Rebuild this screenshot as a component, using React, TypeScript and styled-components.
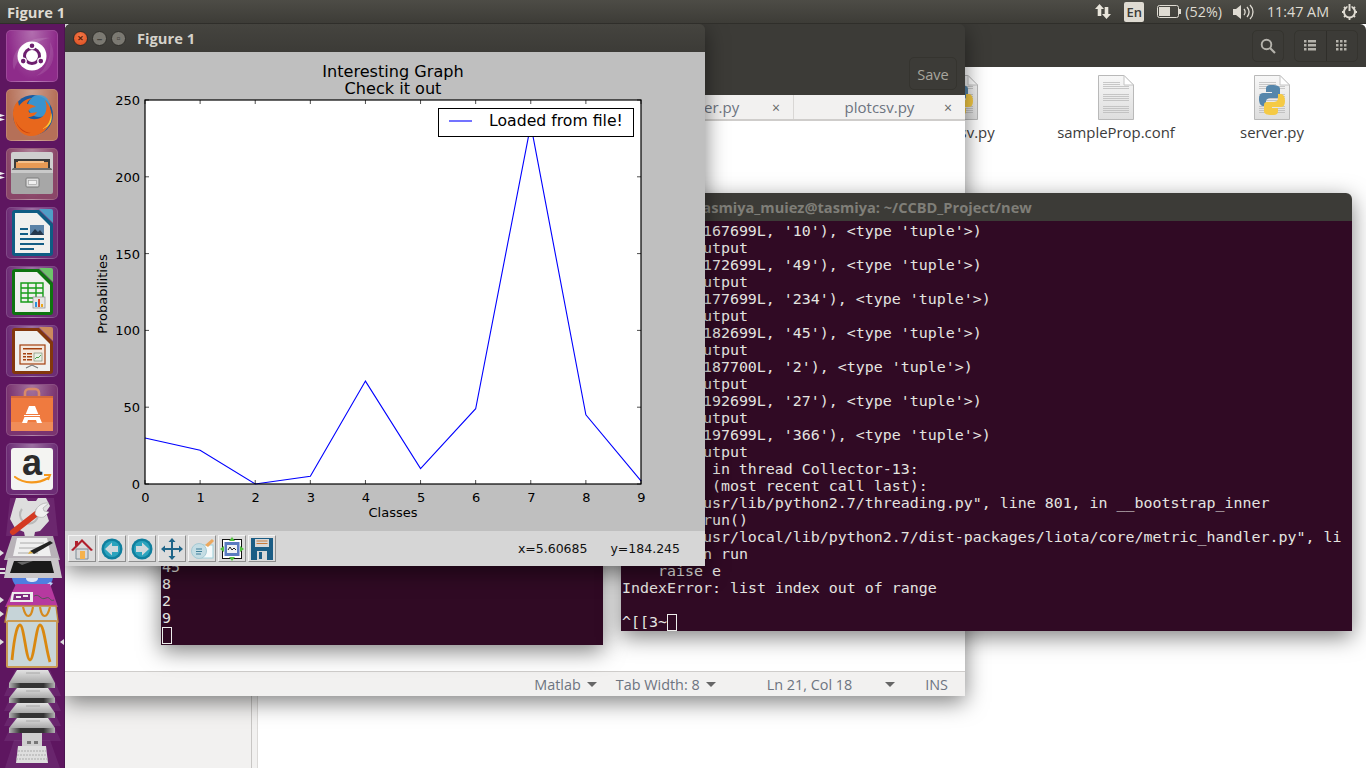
import React from "react";
import styled, { createGlobalStyle } from "styled-components";

/* ── Global ─────────────────────────────────────── */
const Global = createGlobalStyle`
  html, body { margin: 0; padding: 0; width: 1366px; height: 768px; overflow: hidden; background: #fff; }
  * { box-sizing: border-box; }
`;

const uiFont = `"Open Sans", "Noto Sans", sans-serif`;
const plotFont = `"DejaVu Sans", sans-serif`;
const termFont = `"DejaVu Sans Mono", monospace`;

const Screen = styled.div`
  width: 1366px;
  height: 768px;
  display: flex;
  flex-direction: column;
  font-family: ${uiFont};
  overflow: hidden;
`;

/* ── Top panel ──────────────────────────────────── */
const TopPanel = styled.header`
  height: 24px;
  flex-shrink: 0;
  display: flex;
  align-items: center;
  padding: 0 8px 0 7px;
  background: linear-gradient(#4d4c46, #3d3c37);
  border-bottom: 1px solid #2f2e2a;
  color: #dfdbd2;
  position: relative;
  z-index: 20;
`;

const PanelTitle = styled.span`
  font-size: 14.7px;
  font-weight: 700;
  flex: 1;
`;

const PanelItem = styled.span<{ $left: number }>`
  margin-left: ${({ $left }) => $left}px;
  font-size: 14.3px;
  display: flex;
  align-items: center;
  white-space: nowrap;
`;

const LangBadge = styled.span`
  width: 20px;
  height: 20px;
  border-radius: 2px;
  background: #dfdbd2;
  color: #3c3b37;
  font-size: 13px;
  font-weight: 600;
  display: flex;
  align-items: center;
  justify-content: center;
`;

/* ── Desktop ────────────────────────────────────── */
const Body = styled.div`
  flex: 1;
  display: flex;
  min-height: 0;
`;

const Launcher = styled.nav`
  width: 65px;
  flex-shrink: 0;
  padding: 6px 0 0 6px;
  display: flex;
  flex-direction: column;
  gap: 7px;
  background: #5e1660;
  border-right: 1px solid #4c1450;
  position: relative;
  z-index: 10;
`;

const Tile = styled.div<{ $tint: string }>`
  width: 52px;
  height: 52px;
  flex-shrink: 0;
  border-radius: 5px;
  border: 1px solid rgba(255, 255, 255, 0.14);
  background: radial-gradient(ellipse at 50% 0%, rgba(255, 255, 255, 0.32), rgba(255, 255, 255, 0) 70%),
    ${({ $tint }) => $tint};
  position: relative;

  svg {
    display: block;
    position: absolute;
    left: -1px;
    top: -1px;
  }
`;

const Pip = styled.i<{ $top: number }>`
  position: absolute;
  left: -7px;
  top: ${({ $top }) => $top}px;
  width: 5px;
  height: 3px;
  background: #eee;
  clip-path: polygon(0 0, 100% 50%, 0 100%);
`;

const LauncherStack = styled.svg`
  display: block;
  margin: -4px 0 0 -6px;
  flex-shrink: 0;
`;

const Desktop = styled.main`
  flex: 1;
  position: relative;
  min-width: 0;
`;

/* Windows are free items on the desktop, so they are placed by coordinates */
const Win = styled.section<{ $x: number; $y: number; $w: number; $h: number; $z: number }>`
  position: absolute;
  left: ${({ $x }) => $x - 65}px;
  top: ${({ $y }) => $y - 24}px;
  width: ${({ $w }) => $w}px;
  height: ${({ $h }) => $h}px;
  z-index: ${({ $z }) => $z};
  display: flex;
  flex-direction: column;
  border-radius: 6px 6px 0 0;
  overflow: hidden;
`;

const ShadowWin = styled(Win)`
  overflow: visible;
  box-shadow: 0 6px 22px rgba(0, 0, 0, 0.5);
`;

/* ── File manager ───────────────────────────────── */
const FilesHeader = styled.div`
  height: 43px;
  flex-shrink: 0;
  display: flex;
  justify-content: flex-end;
  align-items: center;
  gap: 10px;
  padding-right: 8px;
  background: #3c3b37;
`;

const HeadBtn = styled.div<{ $w: number }>`
  width: ${({ $w }) => $w}px;
  height: 32px;
  display: flex;
  border: 1px solid #35342f;
  border-radius: 5px;
  align-items: center;
  justify-content: center;
`;

const Segment = styled.div<{ $line?: boolean }>`
  flex: 1;
  height: 100%;
  display: flex;
  align-items: center;
  justify-content: center;
  border-left: ${({ $line }) => ($line ? "1px solid #2f2e2a" : "none")};
`;

const FilesMain = styled.div`
  flex: 1;
  display: flex;
  min-height: 0;
`;

const Sidebar = styled.aside`
  width: 187px;
  background: #f2f1f0;
  border-right: 1px solid #c8c6c4;
`;

const SideGap = styled.div`
  width: 6px;
  background: #f2f1f0;
  border-right: 1px solid #dcdad8;
`;

const FileGrid = styled.div`
  flex: 1;
  display: flex;
  justify-content: flex-end;
  align-items: flex-start;
  padding: 8px 16px 0 0;
  background: #fff;
`;

const FileItem = styled.figure`
  width: 156px;
  margin: 0;
  display: flex;
  flex-direction: column;
  align-items: center;
  gap: 2px;
`;

const FileName = styled.figcaption`
  font-size: 14.9px;
  line-height: 20px;
  color: #3c3c3c;
`;

/* ── Editor ─────────────────────────────────────── */
const EditorHeader = styled.div`
  height: 71px;
  flex-shrink: 0;
  display: flex;
  align-items: flex-end;
  justify-content: flex-end;
  padding: 0 8px 5px 0;
  background: #3c3b37;
  border-radius: 6px 6px 0 0;
`;

const SaveBtn = styled.div`
  width: 48px;
  height: 33px;
  display: flex;
  align-items: center;
  justify-content: center;
  border: 1px solid #35342f;
  border-radius: 5px;
  color: #a8a69e;
  font-size: 14.6px;
`;

const TabBar = styled.div`
  height: 26px;
  flex-shrink: 0;
  display: flex;
  justify-content: flex-end;
  background: #f2f1f0;
  border-bottom: 2px solid #cfcdcb;
`;

const Tab = styled.div<{ $line?: boolean }>`
  width: 172px;
  position: relative;
  display: flex;
  align-items: center;
  justify-content: center;
  color: #6d7480;
  font-size: 15px;
  border-left: ${({ $line }) => ($line ? "1px solid #d9d7d5" : "none")};
`;

const TabClose = styled.span`
  position: absolute;
  right: 13px;
  top: 3px;
  font-size: 14px;
  color: #666;
`;

const EditorText = styled.div`
  flex: 1;
  background: #fff;
`;

const StatusBar = styled.footer`
  height: 25px;
  flex-shrink: 0;
  display: flex;
  justify-content: flex-end;
  align-items: center;
  padding-right: 17px;
  background: #f2f1f0;
  border-top: 1px solid #cfcdcb;
  color: #6d7480;
  font-size: 14.4px;
`;

const StatusItem = styled.span<{ $left: number }>`
  margin-left: ${({ $left }) => $left}px;
  display: flex;
  align-items: center;
  gap: 6px;
`;

const Caret = styled.i`
  width: 0;
  height: 0;
  border-left: 5px solid transparent;
  border-right: 5px solid transparent;
  border-top: 5px solid #666;
`;

/* ── Terminals ──────────────────────────────────── */
const TermTitle = styled.div`
  height: 28px;
  flex-shrink: 0;
  display: flex;
  align-items: center;
  padding-left: 75px;
  background: #3c3b37;
  border-radius: 6px 6px 0 0;
  color: #7f7e78;
  font-size: 14.6px;
  font-weight: 700;
`;

const TermBody = styled.pre<{ $end?: boolean }>`
  flex: 1;
  margin: 0;
  padding: ${({ $end }) => ($end ? "0 0 1px 1px" : "2px 0 0 1px")};
  display: flex;
  flex-direction: column;
  justify-content: ${({ $end }) => ($end ? "flex-end" : "flex-start")};
  background: #300a24;
  color: #e4e4e0;
  font-family: ${termFont};
  font-size: 14.95px;
  line-height: 17px;
  overflow: hidden;
`;

const TermLine = styled.div<{ $indent?: number }>`
  min-height: 17px;
  height: 17px;
  white-space: pre;
  margin-left: ${({ $indent }) => ($indent ?? 0) * 8.99}px;
`;

const TermCursor = styled.span`
  display: inline-block;
  width: 10px;
  height: 17px;
  border: 1px solid #eeeeec;
  vertical-align: top;
`;

/* ── Figure window ──────────────────────────────── */
const FigTitleBar = styled.div`
  height: 28px;
  flex-shrink: 0;
  display: flex;
  align-items: center;
  gap: 4px;
  padding-left: 8px;
  background: linear-gradient(#45443f, #3c3b37);
  border-radius: 6px 6px 0 0;
`;

const WinDot = styled.span<{ $close?: boolean }>`
  width: 15px;
  height: 15px;
  border-radius: 50%;
  background: ${({ $close }) => ($close ? "radial-gradient(circle at 50% 35%, #f47a4a, #d9491c)" : "#7b7972")};
  color: ${({ $close }) => ($close ? "#5c1d08" : "#44433e")};
  border: 1px solid #2e2d29;
  font-size: 11px;
  line-height: 12px;
  text-align: center;
  font-weight: 700;
`;

const FigTitle = styled.span`
  margin-left: 7px;
  color: #d5d2ca;
  font-size: 14.7px;
  font-weight: 700;
`;

const Canvas = styled.svg`
  display: block;
  flex-shrink: 0;
  background: #bfbfbf;
`;

const PlotText = styled.text<{ $size?: number; $anchor?: string }>`
  font-family: ${plotFont};
  font-size: ${({ $size }) => $size ?? 13}px;
  text-anchor: ${({ $anchor }) => $anchor ?? "middle"};
  fill: #000;
`;

const FigToolbar = styled.div`
  flex: 1;
  display: flex;
  align-items: center;
  gap: 2px;
  padding: 0 25px 0 3px;
  background: #d6d6d6;
`;

const ToolBtn = styled.div`
  width: 28px;
  height: 27px;
  display: flex;
  align-items: center;
  justify-content: center;
  background: #dcdcdc;
  border: 1px solid;
  border-color: #f4f4f4 #8f8f8f #8f8f8f #f4f4f4;
`;

const Coords = styled.span<{ $left?: boolean }>`
  font-family: ${plotFont};
  font-size: 12.5px;
  color: #111;
  margin-left: ${({ $left }) => ($left ? "auto" : "21px")};
  white-space: nowrap;
`;

/* ── Chart data ─────────────────────────────────── */
const values = [30, 22, 0, 5, 67, 10, 49, 234, 45, 2];
const plot = { x: 80, y: 48, w: 496, h: 384 };
const px = (i: number) => plot.x + (i * plot.w) / 9;
const py = (v: number) => plot.y + plot.h - (v / 250) * plot.h;

const Chart = () => (
  <Canvas width={640} height={479} viewBox="0 0 640 479">
    <PlotText x={328} y={25} $size={16.1}>Interesting Graph</PlotText>
    <PlotText x={328} y={42} $size={16.1}>Check it out</PlotText>
    <rect x={plot.x} y={plot.y} width={plot.w} height={plot.h} fill="#fff" stroke="none" />
    <polyline
      points={values.map((v, i) => `${px(i)},${py(v)}`).join(" ")}
      fill="none"
      stroke="#0000ff"
      strokeWidth={1.1}
    />
    {values.map((_, i) => (
      <g key={i}>
        <path d={`M${px(i)} ${plot.y}v4M${px(i)} ${plot.y + plot.h}v-4`} stroke="#000" strokeWidth={0.7} />
        <PlotText x={px(i) + 0.5} y={plot.y + plot.h + 18}>{i}</PlotText>
      </g>
    ))}
    {[0, 50, 100, 150, 200, 250].map((v) => (
      <g key={v}>
        <path d={`M${plot.x} ${py(v)}h4M${plot.x + plot.w} ${py(v)}h-4`} stroke="#000" strokeWidth={0.7} />
        <PlotText x={plot.x - 5} y={py(v) + 5} $anchor="end">{v}</PlotText>
      </g>
    ))}
    <rect x={plot.x} y={plot.y} width={plot.w} height={plot.h} fill="none" stroke="#000" strokeWidth={1.2} />
    <PlotText x={328} y={465} $size={13}>Classes</PlotText>
    <PlotText transform="translate(42 242) rotate(-90)" $size={13}>Probabilities</PlotText>
    <rect x={373.5} y={56.5} width={195} height={28} fill="#fff" stroke="#000" strokeWidth={1} />
    <path d="M384 69h23" stroke="#0000ff" strokeWidth={1.1} />
    <PlotText x={424} y={74} $size={15.7} $anchor="start">Loaded from file!</PlotText>
  </Canvas>
);

/* ── Launcher icons ─────────────────────────────── */
const DashIcon = () => (
  <svg width={52} height={52} viewBox="0 0 52 52">
    <path d="M8 40C2 22 20 6 44 8c-14 2-30 14-36 32z" fill="#fff" opacity={0.12} />
    <path d="M44 12c8 14 2 30-14 34 10-6 16-20 14-34z" fill="#fff" opacity={0.1} />
    <circle cx={26} cy={26} r={14.5} fill="#fff" />
    <circle cx={26} cy={26} r={7.5} fill="none" stroke="#6d1f6e" strokeWidth={3} />
    <circle cx={26} cy={15.8} r={3} fill="#6d1f6e" stroke="#fff" strokeWidth={1.4} />
    <circle cx={17.2} cy={31.1} r={3} fill="#6d1f6e" stroke="#fff" strokeWidth={1.4} />
    <circle cx={34.8} cy={31.1} r={3} fill="#6d1f6e" stroke="#fff" strokeWidth={1.4} />
  </svg>
);

const FirefoxIcon = () => (
  <svg width={52} height={52} viewBox="0 0 52 52">
    <circle cx={27} cy={26} r={20} fill="#1d5a9e" />
    <circle cx={33} cy={17} r={11} fill="#3f9ed6" opacity={0.85} />
    <path
      d="M7 25c0-6 2-10 5-13l1 5c2-3 6-7 13-8-3 2-5 4-5 6 3 0 7 1 9 3-3 0-6 1-7 3-1 1 0 3 2 3 3 0 5-1 6-1-1 3-5 5-9 5 3 3 9 3 14 0 4-3 6-9 3-17 4 4 8 12 6 20-2 9-10 16-20 16C15 47 7 37 7 25z"
      fill="#e8671c"
    />
    <path d="M36 40c6-3 9-9 9-16 1 2 1 6 0 9-2 4-5 6-9 7z" fill="#f8c93a" />
    <path d="M9 30c2 7 8 13 16 14-6 1-13-3-16-14z" fill="#c9410f" />
  </svg>
);

const FilesIcon = () => (
  <svg width={52} height={52} viewBox="0 0 52 52">
    <path d="M5 6a2 2 0 0 1 2-2h38a2 2 0 0 1 2 2v20H5z" fill="#cfcfcf" />
    <rect x={8} y={11} width={36} height={18} fill="#3b3b3b" />
    <rect x={10} y={14} width={32} height={12} fill="#e89a55" />
    <rect x={12} y={13} width={26} height={2} fill="#f4c08c" />
    <path d="M7 20h38l2 3H5z" fill="#6d6d6d" />
    <rect x={5} y={22} width={42} height={24} rx={2} fill="#a7a7a7" />
    <rect x={5} y={22} width={42} height={3} fill="#c9c9c9" />
    <rect x={20} y={30} width={13} height={9} rx={1} fill="#dcdcdc" stroke="#7b7b7b" />
    <rect x={22.5} y={32.5} width={8} height={4} fill="#f1f1f1" stroke="#9a9a9a" strokeWidth={0.6} />
  </svg>
);

const OfficePage = ({ edge, light, children }: { edge: string; light: string; children: React.ReactNode }) => (
  <svg width={52} height={52} viewBox="0 0 52 52">
    <path d="M33 2h12a2 2 0 0 1 2 2v12z" fill={light} />
    <path d="M6 6a3 3 0 0 1 3-3h24l14 14v29a3 3 0 0 1-3 3H9a3 3 0 0 1-3-3z" fill={edge} />
    <path d="M9 6h22l13 13v27H9z" fill="#f0f0ee" />
    {children}
  </svg>
);

const WriterIcon = () => (
  <OfficePage edge="#0f5c83" light="#4f9ec6">
    <path d="M14 21h8v2h-8zM14 26h8v2h-8zM14 31h24v2H14zM14 36h24v2H14zM14 41h14v2H14z" fill="#135d85" />
    <rect x={24} y={18} width={14} height={10} fill="#5a83a8" />
    <path d="M24 28l5-6 3 3 2-2 4 5z" fill="#26384d" />
  </OfficePage>
);

const CalcIcon = () => (
  <OfficePage edge="#0e7410" light="#6dc46a">
    <path
      d="M15 17h22v19H15zM15 22h22M15 27h22M15 32h22M22 17v19M30 17v19"
      fill="none"
      stroke="#169c19"
      strokeWidth={1.4}
    />
    <rect x={27} y={31} width={12} height={11} fill="#e4e4e4" stroke="#8a8a8a" strokeWidth={0.7} />
    <path d="M29 36h2v5h-2z" fill="#2b8fdc" />
    <path d="M32 33h2v8h-2z" fill="#d8462c" />
    <path d="M35 38h2v3h-2z" fill="#eba61c" />
  </OfficePage>
);

const ImpressIcon = () => (
  <OfficePage edge="#83370d" light="#cb8a5d">
    <rect x={14} y={20} width={25} height={19} fill="#f4e8dd" stroke="#a3400f" strokeWidth={1.2} />
    <path d="M17 23h19v1.6H17zM17 28h3v1.6h-3zM17 31h3v1.6h-3zM17 34h3v1.6h-3zM21 28h5v1.6h-5zM21 31h5v1.6h-5zM21 34h5v1.6h-5z" fill="#a3400f" />
    <rect x={28} y={28} width={8} height={8} fill="#e8efe4" stroke="#70806a" strokeWidth={0.6} />
    <path d="M29 34l2-2 1 1 3-3" fill="none" stroke="#3f9a3d" strokeWidth={0.9} />
    <path d="M20 43l6-3 6 3" fill="none" stroke="#777" strokeWidth={1.1} />
  </OfficePage>
);

const SoftwareIcon = () => (
  <svg width={52} height={52} viewBox="0 0 52 52">
    <path d="M19 14v-5a4 4 0 0 1 4-4h6a4 4 0 0 1 4 4v5" fill="none" stroke="#d98a68" strokeWidth={2.6} />
    <path d="M5 12h42v3H5z" fill="#d5693b" />
    <path d="M5 14h42v33H5z" fill="#ef7a3f" />
    <path d="M5 38h42v9H5z" fill="#f08c58" />
    <path d="M23 22h6l7 17h-5l-1-3H22l-1 3h-5z" fill="#fff" />
    <path d="M17 30h18v3H17z" fill="#ef7a3f" />
    <path d="M18 31h16v1H18z" fill="#fff" />
  </svg>
);

const AmazonMark = styled.text`
  font-family: "Liberation Sans", sans-serif;
  font-size: 36px;
  font-weight: 700;
  fill: #2b2b2b;
  text-anchor: middle;
`;

const AmazonIcon = () => (
  <svg width={52} height={52} viewBox="0 0 52 52">
    <rect x={5} y={5} width={42} height={42} rx={3} fill="#f4f4f2" />
    <AmazonMark x={26} y={32}>a</AmazonMark>
    <path d="M9 34c9 7 23 7 33 1" fill="none" stroke="#f5981c" strokeWidth={2.2} strokeLinecap="round" />
    <path d="M38 32l6 0-2 5" fill="none" stroke="#f5981c" strokeWidth={2} />
  </svg>
);

/* one collapsed drive: grey top face, dark front edge, tinted tile behind */
const Drive = ({ y, h }: { y: number; h: number }) => (
  <g>
    <path d={`M15 ${y}L4 ${y + h + 8}H61L50 ${y}z`} fill="#8a4f8e" opacity={0.28} />
    <path d={`M17 ${y}H48L55 ${y + h - 5}H9z`} fill="url(#driveTop)" />
    <path d={`M9 ${y + h - 5}H55V${y + h}H9z`} fill="url(#driveEdge)" />
    <path d={`M26 ${y + 3}H40`} stroke="#a6a6a6" fill="none" />
  </g>
);

/* collapsed launcher items at the bottom of the strip, one drawing */
const StackIcons = () => (
  <LauncherStack width={65} height={270} viewBox="0 498 65 270">
    <defs>
      <linearGradient id="driveTop" x1="0" y1="0" x2="0" y2="1">
        <stop offset="0" stopColor="#e2e2e2" />
        <stop offset="1" stopColor="#a8a8a8" />
      </linearGradient>
      <linearGradient id="driveEdge" x1="0" y1="0" x2="1" y2="0">
        <stop offset="0" stopColor="#b5b5b5" />
        <stop offset="0.25" stopColor="#333" />
        <stop offset="0.75" stopColor="#333" />
        <stop offset="1" stopColor="#b5b5b5" />
      </linearGradient>
    </defs>
    {/* settings gear + wrench */}
    <path d="M10 498H54L58 536H6z" fill="#8a4f8e" opacity={0.3} />
    <path d="M16 498h10l2 3h8l2-3h8l4 8-4 6 3 9-9 10-5 1-1 5h-9l-1-5-9-4-5-9 3-11z" fill="#dedede" />
    <path d="M22 509a9 9 0 1 0 14 0" fill="none" stroke="#b9b9b9" strokeWidth={2} />
    <path d="M13 532L36 514" stroke="#d43a22" strokeWidth={6} strokeLinecap="round" />
    <path d="M35 514c0-6 6-12 14-11l-6 5 1 3 5 1-5 5c-4 1-7 0-9-3z" fill="#efefef" stroke="#a5a5a5" strokeWidth={0.6} />
    {/* text editor */}
    <path d="M12 536H53L60 560H4z" fill="#b8b2b8" />
    <path d="M17 538H47L51 556H13z" fill="#efefef" />
    <path d="M20 543H44M19 548H44M18 553H38" stroke="#aaa" />
    <path d="M30 551L50 541l3 2-19 11z" fill="#222" />
    <path d="M30 551l-2 3 5-1z" fill="#e3b23a" />
    {/* tablet */}
    <path d="M8 558H58L62 578H4z" fill="#c9c6c9" />
    <path d="M14 561H51L54 573H10z" fill="#1a1a1a" />
    <path d="M17 562L33 561 22 565z" fill="#666" />
    {/* disc */}
    <path d="M12 578H53C52 586 42 591 32 591S13 586 12 578z" fill="#4f7ee0" />
    <path d="M26 578h12c0 3-3 4-6 4s-6-1-6-4z" fill="#dfe6f4" />
    <path d="M38 590L50 582l3 1-6 7z" fill="#bcd2f6" />
    {/* photo manager */}
    <path d="M16 584H50L58 607H5z" fill="#b6399f" />
    <path d="M12 592H33V602H10z" fill="#eee" />
    <path d="M14 594H30V600H13z" fill="#7b2a7d" />
    <path d="M16 596h5v2h-5zM23 595h5v2h-5z" fill="#eee" />
    <path d="M34 596c6-3 6 5 12 2 4-2 4 4 8 2" stroke="#555" fill="none" />
    {/* active wave icon */}
    <path d="M8 606H56L58 622H5z" fill="#c6d4d8" stroke="#c08a3c" strokeWidth={1.4} />
    <path d="M23 607c3 12 8 12 10 0M40 607c2 12 7 12 10 0" fill="none" stroke="#d58a1e" strokeWidth={2.2} />
    <rect x={7} y={621} width={50} height={46} rx={1} fill="#c9d6d8" stroke="#c99a55" strokeWidth={2} />
    <path
      d="M12 660C15 630 18 625 20 625C24 625 26 660 30 660C34 660 36 625 40 625C44 625 46 650 50 662"
      fill="none"
      stroke="#d9880f"
      strokeWidth={2.8}
    />
    <path d="M0 639l4 3-4 3zM64 639l-4 3 4 3z" fill="#ddd" />
    <path d="M0 611l4 3-4 3zM0 597l4 3-4 3zM0 550l4 3-4 3z" fill="#ddd" />
    <path d="M0 568h5v2H0zM0 572h5v2H0z" fill="#ddd" />
    {/* drives */}
    <Drive y={670} h={18} />
    <Drive y={688} h={15} />
    <Drive y={703} h={15} />
    <Drive y={718} h={15} />
    {/* usb */}
    <path d="M14 740H50L60 768H5z" fill="#8a4f8e" opacity={0.28} />
    <rect x={22} y={733} width={20} height={13} fill="#cfcfcf" />
    <path d="M27 741h4v3h-4zM34 741h4v3h-4z" fill="#777" />
    <path d="M18 746H46L48 763H16z" fill="#dedede" />
    <path d="M18 751H46M17 755H47M16 759H48" stroke="#aaa" strokeDasharray="2 1" />
  </LauncherStack>
);

/* ── Toolbar icons ──────────────────────────────── */
const HomeGlyph = () => (
  <svg width={24} height={24} viewBox="0 0 24 24">
    <path d="M6 12h12v10H6z" fill="#d8d8d8" stroke="#7d8c96" />
    <path d="M10 14h5v8h-5z" fill="#f5b24a" />
    <path d="M1 13L12 2l11 11-2 1-9-9-9 9z" fill="#b0202c" />
    <path d="M5 4h3v4l-3 3z" fill="#b0202c" />
  </svg>
);

const ArrowGlyph = ({ flip }: { flip?: boolean }) => (
  <svg width={24} height={24} viewBox="0 0 24 24">
    <circle cx={12} cy={12} r={10.5} fill="#0f7f9e" />
    <circle cx={12} cy={12} r={8} fill="#2ba3bd" />
    <path d={flip ? "M19 12l-7-6.5V9H6v6h6v3.5z" : "M5 12l7-6.5V9h6v6h-6v3.5z"} fill="#cfd8dc" />
  </svg>
);

const MoveGlyph = () => (
  <svg width={24} height={24} viewBox="0 0 24 24">
    <path
      d="M12 1l3.5 4H13v6h6V8.5l4 3.5-4 3.5V13h-6v6h2.5L12 23l-3.5-4H11v-6H5v2.5L1 12l4-3.5V11h6V5H8.5z"
      fill="#1f6589"
    />
  </svg>
);

const ZoomGlyph = () => (
  <svg width={24} height={24} viewBox="0 0 24 24">
    <rect x={7} y={8} width={16} height={13} fill="#f5fafb" stroke="#9ed0da" />
    <path d="M15 8l7-6 2 2-6 6z" fill="#eca85e" />
    <circle cx={9} cy={14} r={7.5} fill="#c4dde4" stroke="#a6cad4" />
    <path d="M6 12h6M6 14.5h6M6 17h5" stroke="#3e7f99" strokeWidth={1.2} />
  </svg>
);

const SubplotGlyph = () => (
  <svg width={24} height={24} viewBox="0 0 24 24">
    <rect x={2.5} y={2.5} width={19} height={19} fill="#fff" stroke="#111" />
    <rect x={4.5} y={5} width={15} height={14} fill="#5a7cc0" />
    <rect x={7} y={8} width={10} height={8} fill="#eef2f4" />
    <path d="M8 13l2-3 2 3 2-2 2 2" fill="none" stroke="#222" />
    <path d="M12 0l3 4H9zM12 24l-3-4h6zM0 12l4-3v6zM24 12l-4 3V9z" fill="#52c23f" />
  </svg>
);

const SaveGlyph = () => (
  <svg width={24} height={24} viewBox="0 0 24 24">
    <rect x={1} y={1} width={22} height={22} fill="#1b5d85" />
    <rect x={5} y={2} width={14} height={8} fill="#d8d8d8" />
    <path d="M6.5 4h11M6.5 6.5h11" stroke="#c97c3c" />
    <rect x={7} y={14} width={10} height={9} fill="#d8d8d8" />
    <rect x={9} y={15} width={3} height={7} fill="#1b5d85" />
  </svg>
);

/* ── Small UI icons ─────────────────────────────── */
const UpDownIcon = () => (
  <svg width={16} height={17} viewBox="0 0 16 17">
    <path d="M4.5 1L9 6H6.3v7H2.7V6H0zM11.5 16L7 11h2.7V4h3.6v7H16z" fill="#e8e4da" />
  </svg>
);

const BatteryIcon = () => (
  <svg width={24} height={13} viewBox="0 0 24 13">
    <rect x={0.5} y={0.5} width={21} height={12} rx={2} fill="none" stroke="#dfdbd2" />
    <rect x={2} y={2} width={11} height={9} fill="#dfdbd2" />
    <rect x={22} y={4} width={2} height={5} fill="#dfdbd2" />
  </svg>
);

const VolumeIcon = () => (
  <svg width={21} height={16} viewBox="0 0 21 16">
    <path d="M0 5h3l5-4v14l-5-4H0z" fill="#dfdbd2" />
    <path d="M11 5c1.5 2 1.5 4 0 6M14 3c2.5 3 2.5 7 0 10M17 1c4 4 4 10 0 14" fill="none" stroke="#dfdbd2" strokeWidth={1.3} />
  </svg>
);

const PowerIcon = () => (
  <svg width={17} height={17} viewBox="0 0 17 17">
    <circle cx={8.5} cy={9} r={5.5} fill="none" stroke="#dfdbd2" strokeWidth={2} />
    <path d="M8.5 1v7" stroke="#3d3c37" strokeWidth={4} />
    <path d="M8.5 1v7" stroke="#dfdbd2" strokeWidth={2} />
    <path d="M8.5 14.5V17M1 9h2M14 9h2M3 4l1.5 1.5M12.5 5.5L14 4M3 14l1.5-1.5M12.5 12.5L14 14" stroke="#dfdbd2" strokeWidth={1.8} />
  </svg>
);

const SearchIcon = () => (
  <svg width={16} height={16} viewBox="0 0 16 16">
    <circle cx={6.5} cy={6.5} r={4.8} fill="none" stroke="#b5b3ac" strokeWidth={1.9} />
    <path d="M10 10l5 5" stroke="#b5b3ac" strokeWidth={2.2} />
  </svg>
);

const ListIcon = () => (
  <svg width={12} height={11} viewBox="0 0 12 11" fill="#b5b3ac">
    <path d="M0 0h2.5v2.5H0zM4 0h8v2.5H4zM0 4h2.5v2.5H0zM4 4h8v2.5H4zM0 8h2.5v2.5H0zM4 8h8v2.5H4z" />
  </svg>
);

const GridIcon = () => (
  <svg width={11} height={11} viewBox="0 0 11 11" fill="#b5b3ac">
    {[0, 4, 8].flatMap((y) => [0, 4, 8].map((x) => <rect key={`${x}-${y}`} x={x} y={y} width={2.5} height={2.5} />))}
  </svg>
);

const FileIcon = ({ python }: { python?: boolean }) => (
  <svg width={36} height={45} viewBox="0 0 36 45">
    <defs>
      <linearGradient id="pageFill" x1="0" y1="0" x2="0" y2="1">
        <stop offset="0" stopColor="#f7f7f7" />
        <stop offset="1" stopColor="#dedede" />
      </linearGradient>
    </defs>
    <path d="M.5.5H26L35.5 10V44.5H.5z" fill="url(#pageFill)" stroke="#b9b9b9" />
    <path d="M26 .5V10H35.5z" fill="#fff" stroke="#c4c4c4" />
    {[7, 9, 11, 13, 19, 21, 23, 25, 31, 33, 35, 37].map((y) => (
      <path key={y} d={`M5 ${y}.5H${y < 10 ? 22 : 31}`} stroke="#b5b5b5" strokeWidth={0.7} />
    ))}
    {python && (
      <g>
        <path d="M18 10c-6 0-6 2-6 5v2h6v1H9c-3 0-4 3-4 6s1 7 4 7h3v-4c0-3 2-4 5-4h6c2 0 3-1 3-3v-6c0-3-3-4-8-4z" fill="#5586ab" />
        <path d="M18 40c6 0 6-2 6-5v-2h-6v-1h9c3 0 4-3 4-6s-1-7-4-7h-3v4c0 3-2 4-5 4h-6c-2 0-3 1-3 3v6c0 3 3 4 8 4z" fill="#f5ca45" />
      </g>
    )}
  </svg>
);

/* ── Terminal text ──────────────────────────────── */
const tupleRows = [
  ["167699L", "10"],
  ["172699L", "49"],
  ["177699L", "234"],
  ["182699L", "45"],
  ["187700L", "2"],
  ["192699L", "27"],
  ["197699L", "366"],
];

// only the part that shows past the figure window, with its column
const mainLines: { text: string; indent: number }[] = [
  ...tupleRows.flatMap(([t, v]) => [
    { text: `${t}, '${v}'), <type 'tuple'>)`, indent: 9 },
    { text: "utput", indent: 9 },
  ]),
  { text: "in thread Collector-13:", indent: 10 },
  { text: "(most recent call last):", indent: 10 },
  { text: `usr/lib/python2.7/threading.py", line 801, in __bootstrap_inner`, indent: 9 },
  { text: "run()", indent: 9 },
  { text: `usr/local/lib/python2.7/dist-packages/liota/core/metric_handler.py", li`, indent: 9 },
  { text: "n run", indent: 9 },
  { text: "raise e", indent: 4 },
  { text: "IndexError: list index out of range", indent: 0 },
  { text: " ", indent: 0 },
];

export default function App() {
  return (
    <Screen>
      <Global />
      <TopPanel>
        <PanelTitle>Figure 1</PanelTitle>
        <PanelItem $left={0}><UpDownIcon /></PanelItem>
        <PanelItem $left={13}><LangBadge>En</LangBadge></PanelItem>
        <PanelItem $left={13}><BatteryIcon /></PanelItem>
        <PanelItem $left={4}>(52%)</PanelItem>
        <PanelItem $left={11}><VolumeIcon /></PanelItem>
        <PanelItem $left={13}>11:47 AM</PanelItem>
        <PanelItem $left={12}><PowerIcon /></PanelItem>
      </TopPanel>
      <Body>
        <Launcher>
          <Tile $tint="#8e2b8a"><DashIcon /></Tile>
          <Tile $tint="#b57058"><Pip $top={24} /><Pip $top={28} /><FirefoxIcon /></Tile>
          <Tile $tint="#8a4668"><Pip $top={23} /><Pip $top={27} /><FilesIcon /></Tile>
          <Tile $tint="#6d2d75"><WriterIcon /></Tile>
          <Tile $tint="#6d2d75"><CalcIcon /></Tile>
          <Tile $tint="#6d2d75"><ImpressIcon /></Tile>
          <Tile $tint="#7a3470"><SoftwareIcon /></Tile>
          <Tile $tint="#6d2d75"><AmazonIcon /></Tile>
          <StackIcons />
        </Launcher>
        <Desktop>
          {/* file manager */}
          <Win $x={65} $y={24} $w={1301} $h={744} $z={1}>
            <FilesHeader>
              <HeadBtn $w={32}><SearchIcon /></HeadBtn>
              <HeadBtn $w={64}>
                <Segment><ListIcon /></Segment>
                <Segment $line><GridIcon /></Segment>
              </HeadBtn>
            </FilesHeader>
            <FilesMain>
              <Sidebar />
              <SideGap />
              <FileGrid>
                <FileItem><FileIcon python /><FileName>plotcsv.py</FileName></FileItem>
                <FileItem><FileIcon /><FileName>sampleProp.conf</FileName></FileItem>
                <FileItem><FileIcon python /><FileName>server.py</FileName></FileItem>
              </FileGrid>
            </FilesMain>
          </Win>

          {/* text editor */}
          <ShadowWin $x={65} $y={24} $w={900} $h={672} $z={2}>
            <EditorHeader><SaveBtn>Save</SaveBtn></EditorHeader>
            <TabBar>
              <Tab>server.py<TabClose>×</TabClose></Tab>
              <Tab $line>plotcsv.py<TabClose>×</TabClose></Tab>
            </TabBar>
            <EditorText />
            <StatusBar>
              <StatusItem $left={0}>Matlab<Caret /></StatusItem>
              <StatusItem $left={19}>Tab Width: 8<Caret /></StatusItem>
              <StatusItem $left={51}>Ln 21, Col 18</StatusItem>
              <StatusItem $left={33}><Caret /></StatusItem>
              <StatusItem $left={30}>INS</StatusItem>
            </StatusBar>
          </ShadowWin>

          {/* terminal behind the figure */}
          <ShadowWin $x={161} $y={440} $w={442} $h={205} $z={3}>
            <TermBody $end>
              <TermLine>45</TermLine>
              <TermLine>8</TermLine>
              <TermLine>2</TermLine>
              <TermLine>9</TermLine>
              <TermLine><TermCursor /></TermLine>
            </TermBody>
          </ShadowWin>

          {/* main terminal */}
          <ShadowWin $x={621} $y={193} $w={731} $h={438} $z={4}>
            <TermTitle>tasmiya_muiez@tasmiya: ~/CCBD_Project/new</TermTitle>
            <TermBody>
              {mainLines.map((line, i) => (
                <TermLine key={i} $indent={line.indent}>{line.text}</TermLine>
              ))}
              <TermLine>^[[3~<TermCursor /></TermLine>
            </TermBody>
          </ShadowWin>

          {/* matplotlib figure */}
          <ShadowWin $x={65} $y={24} $w={640} $h={542} $z={5}>
            <FigTitleBar>
              <WinDot $close>×</WinDot>
              <WinDot>–</WinDot>
              <WinDot>▫</WinDot>
              <FigTitle>Figure 1</FigTitle>
            </FigTitleBar>
            <Chart />
            <FigToolbar>
              <ToolBtn><HomeGlyph /></ToolBtn>
              <ToolBtn><ArrowGlyph /></ToolBtn>
              <ToolBtn><ArrowGlyph flip /></ToolBtn>
              <ToolBtn><MoveGlyph /></ToolBtn>
              <ToolBtn><ZoomGlyph /></ToolBtn>
              <ToolBtn><SubplotGlyph /></ToolBtn>
              <ToolBtn><SaveGlyph /></ToolBtn>
              <Coords $left>x=5.60685</Coords>
              <Coords>y=184.245</Coords>
            </FigToolbar>
          </ShadowWin>
        </Desktop>
      </Body>
    </Screen>
  );
}
